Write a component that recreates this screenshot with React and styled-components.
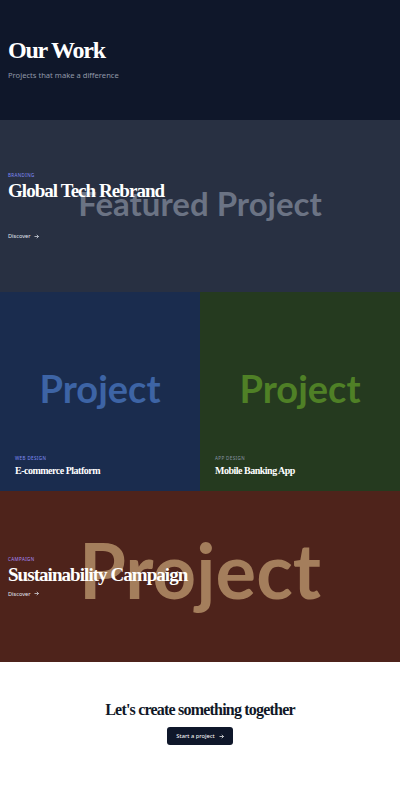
import React from "react";
import styled, { createGlobalStyle } from "styled-components";

const GlobalStyle = createGlobalStyle`
  html, body { margin: 0; padding: 0; background: #ffffff; }
  body { font-family: "Noto Sans", "Open Sans", sans-serif; }
  * { box-sizing: border-box; }
`;

const serif = `"Liberation Serif", "DejaVu Serif", serif`;
const display = `Lato, "Noto Sans", sans-serif`;

const Header = styled.header`
  height: 120px;
  background: #0f172a;
  padding: 36px 8px 0;
`;
const PageTitle = styled.h1`
  margin: 0;
  font-family: ${serif};
  font-weight: 700;
  font-size: 24px;
  line-height: 28px;
  color: #ffffff;
  letter-spacing: -0.05em;
`;
const Subtitle = styled.p`
  margin: 6px 0 0;
  font-size: 7.6px;
  color: #8f97a8;
`;

const Block = styled.section`
  position: relative;
  overflow: hidden;
  height: ${(p) => p.$h}px;
  background: ${(p) => p.$bg};
  display: flex;
  flex-direction: column;
  justify-content: ${(p) => (p.$bottom ? "flex-end" : "center")};
  padding: ${(p) => (p.$bottom ? "0 15px 14px" : "0 8px")};
`;
const Ghost = styled.div`
  position: absolute;
  inset: 0;
  display: flex;
  align-items: center;
  justify-content: center;
  padding-bottom: ${(p) => p.$lift * 2}px;
  font-family: ${display};
  font-weight: 700;
  font-size: ${(p) => p.$size}px;
  color: ${(p) => p.$color};
  white-space: nowrap;
  pointer-events: none;
  line-height: 1;
`;
const Content = styled.div`
  position: relative;
  display: flex;
  flex-direction: column;
`;
const Tag = styled.span`
  font-size: 4.5px;
  letter-spacing: 0.4px;
  text-transform: uppercase;
  color: ${(p) => p.$color || "#818cf8"};
  line-height: 6px;
`;
const Title = styled.h2`
  margin: ${(p) => (p.$small ? "3px 0 0" : "2px 0 0")};
  font-family: ${serif};
  font-weight: 700;
  font-size: ${(p) => (p.$small ? 10 : 19)}px;
  line-height: ${(p) => (p.$small ? 13 : 22)}px;
  color: #ffffff;
  letter-spacing: -0.05em;
`;
const Discover = styled.a`
  margin-top: ${(p) => p.$gap}px;
  display: flex;
  align-items: center;
  gap: 4px;
  font-size: 5.6px;
  color: #e2e8f0;
  text-decoration: none;
`;
const Arrow = () => (
  <svg width="5" height="5" viewBox="0 0 10 10" fill="none" stroke="currentColor" strokeWidth="1.4">
    <path d="M1 5h8M5.5 1.5L9 5l-3.5 3.5" />
  </svg>
);

const Grid = styled.div`
  display: grid;
  grid-template-columns: 1fr 1fr;
`;

const Cta = styled.section`
  height: 123px;
  display: flex;
  flex-direction: column;
  align-items: center;
  padding-top: 39px;
  background: #ffffff;
`;
const CtaTitle = styled.h3`
  margin: 0;
  font-family: ${serif};
  font-weight: 700;
  font-size: 16px;
  color: #111827;
  letter-spacing: -0.05em;
`;
const CtaButton = styled.button`
  margin-top: 8px;
  height: 18px;
  padding: 0 9px;
  border: none;
  border-radius: 3px;
  background: #0f172a;
  color: #ffffff;
  font-family: "Noto Sans", sans-serif;
  font-size: 5.8px;
  display: flex;
  align-items: center;
  gap: 4px;
`;

export default function App() {
  return (
    <>
      <GlobalStyle />
      <Header>
        <PageTitle>Our Work</PageTitle>
        <Subtitle>Projects that make a difference</Subtitle>
      </Header>

      <Block $h={172} $bg="#283042">
        <Ghost $size={33} $lift={3} $color="#6b7384">Featured Project</Ghost>
        <Content>
          <Tag>Branding</Tag>
          <Title>Global Tech Rebrand</Title>
          <Discover $gap={30} href="#">
            Discover <Arrow />
          </Discover>
        </Content>
      </Block>

      <Grid>
        <Block $h={199} $bg="#1a2c4e" $bottom>
          <Ghost $size={38} $lift={4} $color="#3d64a5">Project</Ghost>
          <Content>
            <Tag>Web design</Tag>
            <Title $small>E-commerce Platform</Title>
          </Content>
        </Block>
        <Block $h={199} $bg="#253a1f" $bottom>
          <Ghost $size={38} $lift={4} $color="#4f8026">Project</Ghost>
          <Content>
            <Tag $color="#8a94a6">App design</Tag>
            <Title $small>Mobile Banking App</Title>
          </Content>
        </Block>
      </Grid>

      <Block $h={171} $bg="#4e231b">
        <Ghost $size={76} $lift={7} $color="#a47e5c">Project</Ghost>
        <Content>
          <Tag $color="#a78bfa">Campaign</Tag>
          <Title>Sustainability Campaign</Title>
          <Discover $gap={4} href="#">
            Discover <Arrow />
          </Discover>
        </Content>
      </Block>

      <Cta>
        <CtaTitle>Let's create something together</CtaTitle>
        <CtaButton>
          Start a project <Arrow />
        </CtaButton>
      </Cta>
    </>
  );
}
